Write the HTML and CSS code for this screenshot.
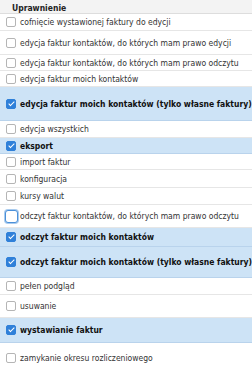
FILE: index.html
```html
<!DOCTYPE html>
<html lang="pl">
<head>
<meta charset="utf-8">
<link rel="stylesheet" href="styles.css">
</head>
<body>
<div class="table">
  <div class="head">Uprawnienie</div>
  <div class="row h17"><span class="cb"></span><span class="lbl">cofnięcie wystawionej faktury do edycji</span></div>
  <div class="row h24"><span class="cb"></span><span class="lbl">edycja faktur kontaktów, do których mam prawo edycji</span></div>
  <div class="row h16"><span class="cb"></span><span class="lbl">edycja faktur kontaktów, do których mam prawo odczytu</span></div>
  <div class="row h16"><span class="cb"></span><span class="lbl">edycja faktur moich kontaktów</span></div>
  <div class="row h34 on"><span class="cb"></span><span class="lbl">edycja faktur moich kontaktów (tylko własne faktury)</span></div>
  <div class="row h17"><span class="cb"></span><span class="lbl">edycja wszystkich</span></div>
  <div class="row h16 on"><span class="cb"></span><span class="lbl">eksport</span></div>
  <div class="row h16"><span class="cb"></span><span class="lbl">import faktur</span></div>
  <div class="row h18"><span class="cb"></span><span class="lbl">konfiguracja</span></div>
  <div class="row h17"><span class="cb"></span><span class="lbl">kursy walut</span></div>
  <div class="row h23 focus"><span class="cb"></span><span class="lbl">odczyt faktur kontaktów, do których mam prawo odczytu</span></div>
  <div class="row h19 on"><span class="cb"></span><span class="lbl">odczyt faktur moich kontaktów</span></div>
  <div class="row h31 on"><span class="cb"></span><span class="lbl">odczyt faktur moich kontaktów (tylko własne faktury)</span></div>
  <div class="row h17"><span class="cb"></span><span class="lbl">pełen podgląd</span></div>
  <div class="row h23"><span class="cb"></span><span class="lbl">usuwanie</span></div>
  <div class="row h25 on"><span class="cb"></span><span class="lbl">wystawianie faktur</span></div>
  <div class="row h30 last"><span class="cb"></span><span class="lbl">zamykanie okresu rozliczeniowego</span></div>
</div>
</body>
</html>
```

FILE: styles.css
```css
html, body {
  margin: 0;
  padding: 0;
  background: #ffffff;
}
body {
  font-family: "DejaVu Sans Condensed", "DejaVu Sans", sans-serif;
  font-size: 8.5px;
  color: #333333;
}
.table {
  display: flex;
  flex-direction: column;
  width: 252px;
}
.head {
  height: 14px;
  box-sizing: border-box;
  padding: 3px 0 0 12px;
  background: #f3f3f3;
  border-bottom: 1px solid #dddddd;
  font-weight: bold;
  color: #222222;
  line-height: 10px;
}
.row {
  display: flex;
  align-items: center;
  box-sizing: border-box;
  padding-left: 6px;
  border-bottom: 1px solid #e6e6e6;
  white-space: nowrap;
}
.row.last { border-bottom: none; }
.h16 { height: 16px; }
.h17 { height: 17px; }
.h18 { height: 18px; }
.h19 { height: 19px; }
.h23 { height: 23px; }
.h24 { height: 24px; }
.h25 { height: 25px; }
.h30 { height: 30px; }
.h31 { height: 31px; }
.h34 { height: 34px; }
.cb {
  flex: none;
  width: 10px;
  height: 10px;
  box-sizing: border-box;
  border: 1px solid #b5b5b5;
  border-radius: 2px;
  background: #ffffff;
  margin-right: 4px;
  position: relative;
}
.lbl { line-height: 10px; }
.on {
  background: #cde3f6;
  border-bottom-color: #b9d3ec;
}
.on .lbl {
  font-weight: bold;
  color: #111111;
}
.on .cb {
  background: #2f80d9;
  border-color: #2f80d9;
}
.on .cb::after {
  content: "";
  position: absolute;
  left: 3px;
  top: 0px;
  width: 2px;
  height: 5px;
  border-right: 1.2px solid #ffffff;
  border-bottom: 1.2px solid #ffffff;
  transform: rotate(45deg);
}
.focus .cb {
  width: 13px;
  height: 13px;
  margin-left: -1px;
  margin-right: 2px;
  border: 1px solid #4a90d9;
  box-shadow: 0 0 0 1px #a9cbee;
  border-radius: 3px;
}
```
